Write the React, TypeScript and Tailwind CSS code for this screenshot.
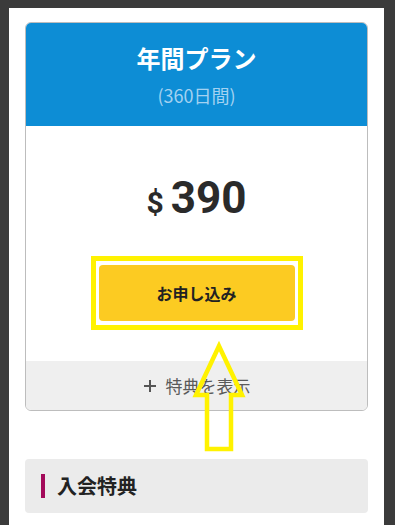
const jp = '"Noto Sans CJK JP", "Noto Sans", sans-serif'

function UpArrow() {
  return (
    <svg
      className="pointer-events-none absolute left-0 top-0"
      width="395"
      height="525"
      viewBox="0 0 395 525"
    >
      <polygon
        points="219,346 196,395 207,395 207,449 231,449 231,395 242,395"
        fill="none"
        stroke="#fff200"
        strokeWidth="4.5"
        strokeLinejoin="miter"
      />
    </svg>
  )
}

export default function App() {
  return (
    <div className="relative h-[525px] w-[395px] overflow-hidden bg-[#3b3b3b]" style={{ fontFamily: jp }}>
      <div className="ml-[9px] mt-[8px] h-[517px] w-[375px] bg-white px-4 pt-[14px]">
        {/* plan card */}
        <div className="overflow-hidden rounded-[6px] border border-[#bdbdbd]">
          <div className="flex h-[103px] flex-col items-center bg-[#0d8dd5] pt-[18px]">
            <div className="text-[24px] font-bold leading-[34px] text-white">年間プラン</div>
            <div className="mt-[8px] text-[18px] leading-[24px] text-[#a3d2f1]">(360日間)</div>
          </div>

          <div className="flex flex-col items-center bg-white pt-[46px] pb-[40px]">
            <div className="flex items-baseline text-[#2a2a2a]" style={{ fontFamily: 'Roboto, "Liberation Sans", sans-serif' }}>
              <span className="mr-[7px] text-[30px] font-bold">$</span>
              <span className="text-[44px] font-bold leading-[52px]">390</span>
            </div>
            <button className="mt-[40px] flex h-[56px] w-[196px] items-center justify-center rounded-[4px] bg-[#fccb22] text-[16px] font-bold text-[#222]">
              お申し込み
            </button>
          </div>

          <div className="flex h-[49px] items-center justify-center gap-[9px] bg-[#efefef] text-[17px] text-[#5a5a5a]">
            <svg width="14" height="14" viewBox="0 0 14 14">
              <path d="M7 1v12M1 7h12" stroke="#555" strokeWidth="2" />
            </svg>
            <span>特典を表示</span>
          </div>
        </div>

        {/* section heading */}
        <div className="mt-[48px] flex h-[54px] items-center rounded-[4px] bg-[#ebebeb] pl-4">
          <div className="h-[24px] w-[4px] bg-[#a30a5a]" />
          <div className="ml-[12px] text-[20px] font-bold text-[#222]">入会特典</div>
        </div>
      </div>

      {/* annotation overlays */}
      <div className="pointer-events-none absolute left-[91px] top-[256px] h-[74px] w-[212px] border-[5px] border-[#fff200]" />
      <UpArrow />
    </div>
  )
}
